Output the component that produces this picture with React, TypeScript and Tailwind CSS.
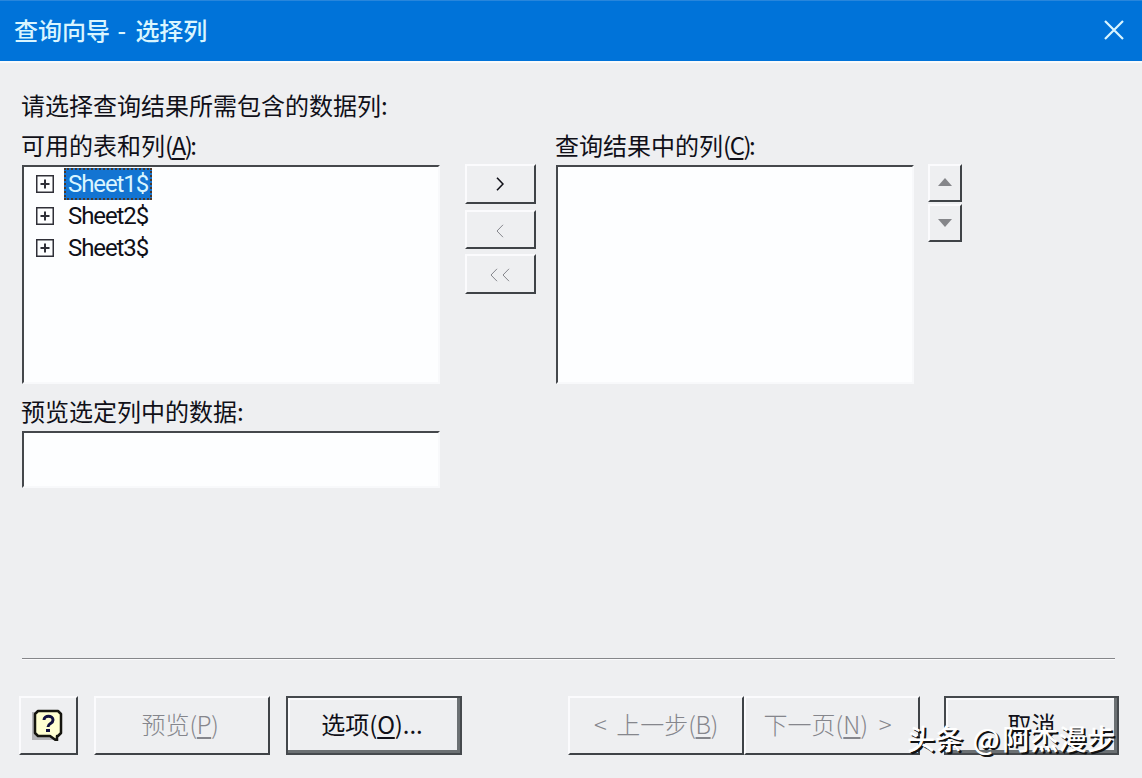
import type { ReactNode } from "react";

interface ButtonProps {
  children: ReactNode;
  className: string;
  disabled?: boolean;
  framed?: boolean;
  label?: string;
}

const sheets = ["Sheet1$", "Sheet2$", "Sheet3$"];

function Button({ children, className, disabled, framed, label }: ButtonProps) {
  const edge = framed
    ? "border-2 border-[#45494d] shadow-[inset_-3px_-3px_0_#6b7073,inset_2px_2px_0_#fbfbfd]"
    : "border-2 border-t-[#fbfbfd] border-l-[#fbfbfd] border-r-[#3f4347] border-b-[#3f4347]";
  return (
    <button
      disabled={disabled}
      aria-label={label}
      className={`flex shrink-0 items-center justify-center whitespace-pre ${edge} ${disabled ? "text-[#85868c] font-light" : "text-[#101018]"} ${className}`}
    >
      {children}
    </button>
  );
}

// Letra de atalho entre parênteses
function Key({ children, className = "tracking-[-1.5px]" }: { children: string; className?: string }) {
  return (
    <span className={className}>
      (<span className="underline decoration-[1.5px] underline-offset-3">{children}</span>)
    </span>
  );
}

function Box({ children, className }: { children?: ReactNode; className: string }) {
  return (
    <div className={`shrink-0 border-2 border-t-[#45484c] border-l-[#45484c] border-r-[#f8f9fb] border-b-[#f8f9fb] bg-[#fdfeff] ${className}`}>
      {children}
    </div>
  );
}

function Chevron({ left, className = "" }: { left?: boolean; className?: string }) {
  return (
    <svg width="8" height="14" viewBox="0 0 8 14" fill="none" stroke="currentColor" className={className}>
      <path d={left ? "M7 .8 1 7l6 6.2" : "M1 .8 7 7l-6 6.2"} />
    </svg>
  );
}

function Arrow({ down }: { down?: boolean }) {
  return (
    <svg width="14" height="8" viewBox="0 0 14 8" fill="#85868a">
      <path d={down ? "M0 0h14L7 8z" : "M7 0l7 8H0z"} />
    </svg>
  );
}

function HelpIcon() {
  return (
    <svg width="34" height="34" viewBox="0 0 34 34" className="-mt-1 -ml-1">
      <path d="M2 5h26v28H2z" fill="#b5b5b9" />
      <path d="M8 4h20l3 3v19l-3 3h-1v5l-7-5H8l-3-3V7z" fill="#ffffd2" stroke="#15150f" strokeWidth="2.5" strokeLinejoin="round" />
      <path d="M14 13c0-5 9-5 9 0 0 4-5 3-5 7" fill="none" stroke="#11113f" strokeWidth="3" />
      <path d="M16 22h4v3h-4z" fill="#11113f" />
    </svg>
  );
}

export default function App() {
  return (
    <div className="relative flex h-[778px] w-[1142px] flex-col overflow-hidden bg-[#eeeff1] font-['Noto_Sans_CJK_SC',sans-serif] text-2xl leading-8 text-[#101018]">
      <header className="flex h-[61px] shrink-0 items-center justify-between border-t border-[#2886dc] bg-[#0073d9] pr-[18px] pb-[2px] pl-[14px] text-[#d9f5ff]">
        <h1 className="font-medium whitespace-pre">查询向导<span className="tracking-[2px]"> - </span>选择列</h1>
        <svg width="20" height="20" viewBox="0 0 20 20" fill="none" stroke="currentColor" strokeWidth="2.2">
          <path d="m1 1 18 18M19 1 1 19" />
        </svg>
      </header>

      <main className="flex h-[597px] shrink-0 flex-col border-t-2 border-[#f9fafb] pl-[22px] pt-[26px]">
        <p className="-ml-px h-10">请选择查询结果所需包含的数据列:</p>
        <div className="flex items-start">
          <section className="w-[418px]">
            <p className="-ml-px h-9">可用的表和列<Key>A</Key><span className="-ml-px">:</span></p>
            <Box className="h-[219px] w-[418px] pt-px">
              {sheets.map((sheet, i) => (
                <div key={sheet} className="flex h-8 items-center gap-[10px] pl-3">
                  <svg width="18" height="18" viewBox="0 0 18 18" fill="none" stroke="#303038">
                    <path d="M.75.75h16.5v16.5H.75z" strokeWidth="1.5" />
                    <path d="M4.5 9h9M9 4.5v9" strokeWidth="2" />
                  </svg>
                  <span className={`flex h-8 w-[88px] items-center border-2 border-dotted pl-0.5 font-[Roboto,sans-serif] tracking-[-1.1px] ${i === 0 ? "border-[#4a382c] bg-[#1374d2] text-[#d9f5ff]" : "border-transparent"}`}>
                    {sheet}
                  </span>
                </div>
              ))}
            </Box>
            <p className="-ml-px mt-[11px] h-9">预览选定列中的数据:</p>
            <Box className="h-[57px] w-[418px]" />
          </section>

          <div className="mt-[35px] ml-[25px] flex w-[71px] flex-col">
            <Button className="h-10 w-[71px] pr-0.5" label="添加"><Chevron className="stroke-[1.6]" /></Button>
            <Button className="mt-[6px] h-[39px] w-[71px] pr-0.5 pt-0.5" disabled label="移除"><Chevron left /></Button>
            <Button className="mt-[5px] h-10 w-[71px] gap-1 pr-0.5 pt-0.5" disabled label="全部移除"><Chevron left /><Chevron left /></Button>
          </div>

          <section className="ml-5 w-[358px]">
            <p className="-ml-px h-9">查询结果中的列<Key>C</Key><span className="-ml-px">:</span></p>
            <Box className="h-[219px] w-[358px]" />
          </section>

          <div className="mt-[35px] ml-[14px] flex flex-col gap-0.5">
            <Button className="h-[38px] w-[34px] pb-0.5" disabled label="上移"><Arrow /></Button>
            <Button className="h-[38px] w-[34px]" disabled label="下移"><Arrow down /></Button>
          </div>
        </div>
      </main>

      <hr className="mr-[27px] ml-[22px] border-0 border-t border-b border-t-[#85868a] border-b-[#fbfbfd]" />
      <footer className="mt-9 flex pl-[19px]">
        <Button className="h-[59px] w-[59px]" label="帮助"><HelpIcon /></Button>
        <Button className="ml-4 h-[59px] w-[176px] pr-1 pb-1" disabled>预览<Key className="tracking-[-0.3px]">P</Key></Button>
        <Button className="ml-4 h-[59px] w-[176px] pr-1 pb-1" framed>选项<Key className="tracking-[-0.2px]">O</Key>...</Button>
        <Button className="ml-[106px] h-[59px] w-[176px] pb-1" disabled><span className="tracking-[2px]">&lt; </span>上一步<Key className="tracking-[-0.3px]">B</Key></Button>
        <Button className="h-[59px] w-[176px] pr-1 pb-1" disabled>下一页<Key className="tracking-[0.3px]">N</Key><span className="tracking-[5px]"> &gt;</span></Button>
        <Button className="ml-6 h-[59px] w-[175px] pb-1" framed>取消</Button>
      </footer>

      <div className="absolute top-[718px] left-[907px] text-[28px] leading-10 font-medium tracking-[0.3px] whitespace-pre text-white [text-shadow:2px_2px_0_#111]">
        头条<span className="tracking-[2.5px]"> @</span>阿杰漫步
      </div>
    </div>
  );
}
